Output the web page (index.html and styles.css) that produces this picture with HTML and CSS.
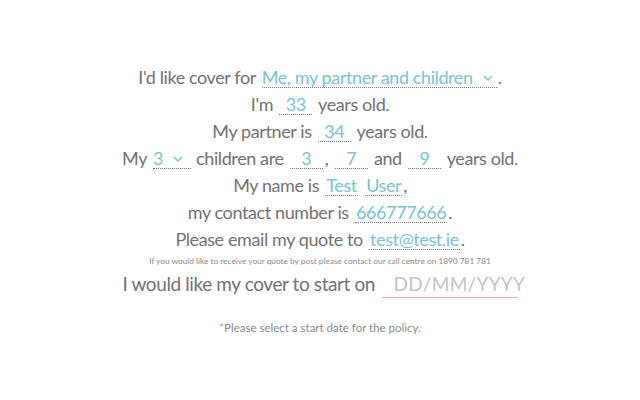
FILE: index.html
```html
<!DOCTYPE html>
<html>
<head>
<meta charset="utf-8">
<link rel="stylesheet" href="styles.css">
</head>
<body>
<form class="quote">
  <p class="line">I'd like cover for <span class="field sel">Me, my partner and children <span class="chev"><svg width="10" height="6" viewBox="0 0 10 6"><path d="M1 1l4 4 4-4" fill="none" stroke="#7bc3cc" stroke-width="1.4"/></svg></span></span>.</p>
  <p class="line">I'm <span class="field num">33</span> years old.</p>
  <p class="line">My partner is <span class="field num">34</span> years old.</p>
  <p class="line">My <span class="field sel small">3 <span class="chev"><svg width="10" height="6" viewBox="0 0 10 6"><path d="M1 1l4 4 4-4" fill="none" stroke="#7bc3cc" stroke-width="1.4"/></svg></span></span> children are <span class="field num">3</span>, <span class="field num">7</span> and <span class="field num">9</span> years old.</p>
  <p class="line">My name is <span class="field txt">Test</span> <span class="field txt">User</span>,</p>
  <p class="line">my contact number is <span class="field txt">666777666</span>.</p>
  <p class="line">Please email my quote to <span class="field txt">test@test.ie</span>.</p>
  <p class="note">If you would like to receive your quote by post please contact our call centre on 1890 781 781</p>
  <p class="line date-line">I would like my cover to start on <span class="date">DD/MM/YYYY</span></p>
  <p class="error"><span class="star">*</span>Please select a start date for the policy.</p>
</form>
</body>
</html>
```
FILE: styles.css
```css
html, body {
  margin: 0;
  padding: 0;
  background: #ffffff;
}
body {
  font-family: "Lato", "Open Sans", sans-serif;
  color: #727272;
  width: 640px;
  height: 400px;
}
.quote {
  display: flex;
  flex-direction: column;
  align-items: center;
  padding-top: 64px;
}
.line {
  margin: 0;
  font-size: 18px;
  line-height: 27px;
  height: 27px;
  white-space: nowrap;
  letter-spacing: -0.4px;
}
.field {
  display: inline-block;
  color: #7bc3cc;
  border-bottom: 1px dotted #777;
  line-height: 20px;
  text-align: center;
  margin: 0 2px;
}
.num { width: 33px; }
.txt { padding: 0 1px; margin-right: 1px; }
.sel { padding-right: 4px; margin-right: 1px; }
.small { width: 34px; text-align: left; }
.chev {
  display: inline-block;
  margin-left: 6px;
  vertical-align: 3px;
}
.chev svg { display: block; }
.note {
  margin: 2px 0 0;
  font-size: 8.3px;
  line-height: 12px;
  color: #8a8a8a;
}
.date-line {
  margin-top: 2px;
  font-size: 19px;
  line-height: 30px;
  height: 30px;
}
.date {
  display: inline-block;
  width: 136px;
  color: #c4c4c4;
  border-bottom: 1.5px solid #f1a8a8;
  line-height: 26px;
  padding-left: 12px;
  box-sizing: border-box;
  margin-left: 2px;
  letter-spacing: 0.3px;
}
.error {
  margin: 22px 0 0;
  font-size: 11.5px;
  color: #8a8a8a;
}
.star { color: #f08080; }
```
